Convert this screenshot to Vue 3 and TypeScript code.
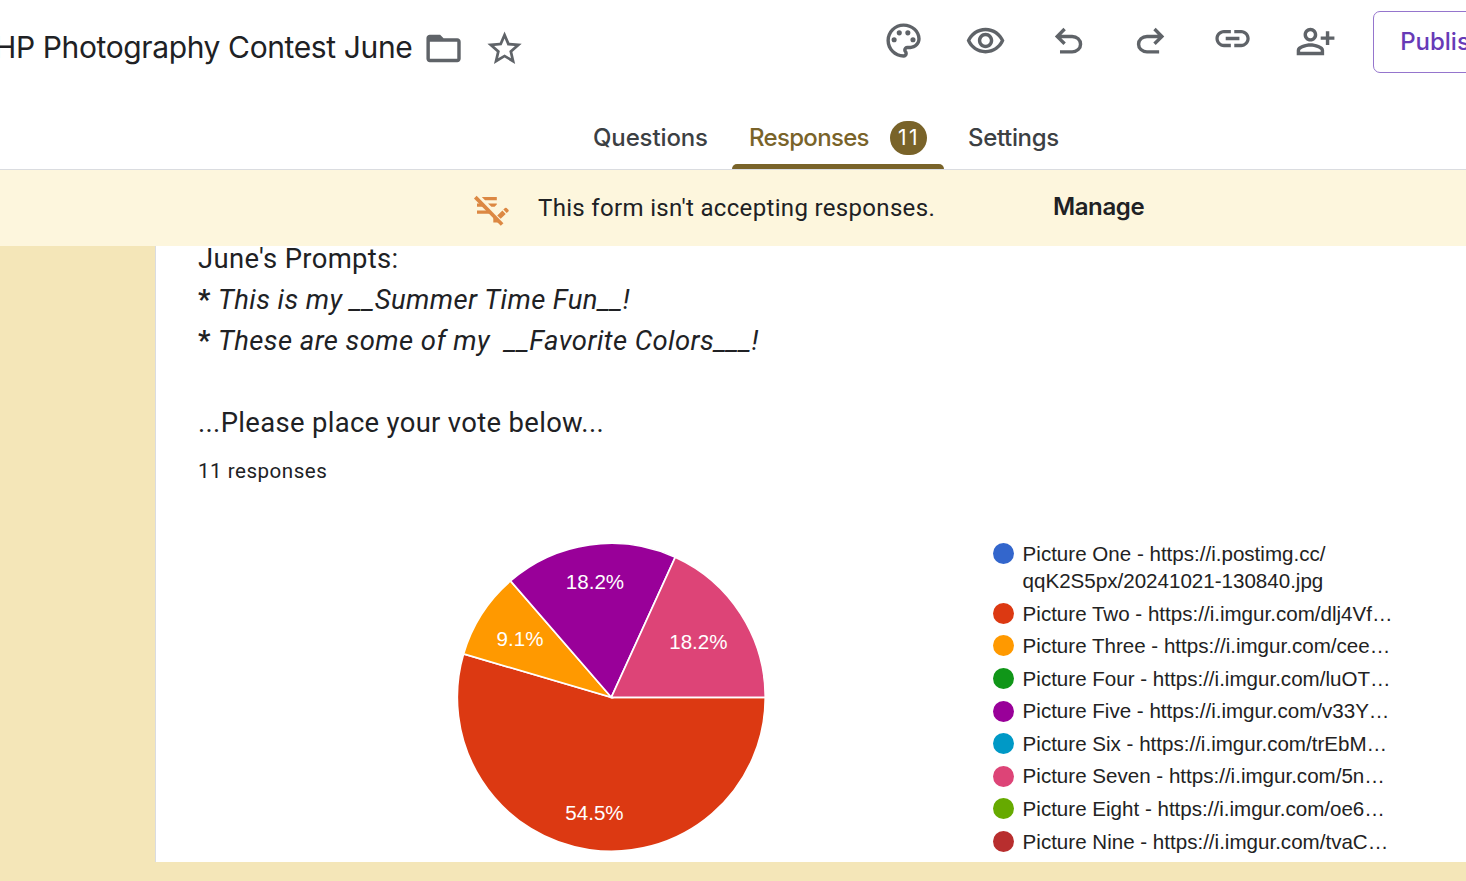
<script setup lang="ts">
interface Slice {
    count: number;
    color: string;
    label: string;
    labelX: number;
    labelY: number;
}

interface LegendItem {
    color: string;
    lines: string[];
}

const CENTER = 154.3;
const RADIUS = 154;

const tools = [
    { name: 'palette', path: 'M12 22C6.49 22 2 17.51 2 12S6.49 2 12 2s10 4.04 10 9c0 3.31-2.69 6-6 6h-1.77c-.28 0-.5.22-.5.5 0 .12.05.23.13.33.41.47.64 1.06.64 1.67A2.5 2.5 0 0 1 12 22zm0-18c-4.41 0-8 3.59-8 8s3.59 8 8 8c.28 0 .5-.22.5-.5a.54.54 0 0 0-.14-.35c-.41-.46-.63-1.05-.63-1.65a2.5 2.5 0 0 1 2.5-2.5H16c2.21 0 4-1.79 4-4 0-3.86-3.59-7-8-7zM5 11.5a1.5 1.5 0 1 0 3 0a1.5 1.5 0 1 0-3 0zM8 7.5a1.5 1.5 0 1 0 3 0a1.5 1.5 0 1 0-3 0zM13 7.5a1.5 1.5 0 1 0 3 0a1.5 1.5 0 1 0-3 0zM16 11.5a1.5 1.5 0 1 0 3 0a1.5 1.5 0 1 0-3 0z' },
    { name: 'preview', path: 'M12 6.5c3.79 0 7.17 2.13 8.82 5.5-1.65 3.37-5.02 5.5-8.82 5.5S4.83 15.37 3.18 12C4.83 8.63 8.21 6.5 12 6.5m0-2C7 4.5 2.73 7.61 1 12c1.73 4.39 6 7.5 11 7.5s9.27-3.11 11-7.5c-1.73-4.39-6-7.5-11-7.5zm0 5a2.5 2.5 0 0 1 0 5 2.5 2.5 0 0 1 0-5m0-2c-2.48 0-4.5 2.02-4.5 4.5s2.02 4.5 4.5 4.5 4.5-2.02 4.5-4.5-2.02-4.5-4.5-4.5z' },
    { name: 'undo', path: 'M7 19v-2h7.1q1.575 0 2.738-1T18 13.5T16.838 11T14.1 10H7.8l2.6 2.6L9 14L4 9l5-5l1.4 1.4L7.8 8h6.3q2.425 0 4.163 1.575T20 13.5t-1.737 3.925T14.1 19z' },
    { name: 'redo', path: 'M9.9 19q-2.425 0-4.163-1.575T4 13.5t1.737-3.925T9.9 8h6.3l-2.6-2.6L15 4l5 5l-5 5l-1.4-1.4l2.6-2.6H9.9q-1.575 0-2.738 1T6 13.5T7.162 16T9.9 17H17v2z' },
    { name: 'link', path: 'M3.9 12c0-1.71 1.39-3.1 3.1-3.1h4V7H7c-2.76 0-5 2.24-5 5s2.24 5 5 5h4v-1.9H7c-1.71 0-3.1-1.39-3.1-3.1zM8 13h8v-2H8v2zm9-6h-4v1.9h4c1.71 0 3.1 1.39 3.1 3.1s-1.39 3.1-3.1 3.1h-4V17h4c2.76 0 5-2.24 5-5s-2.24-5-5-5z' },
    { name: 'share', path: 'M9 12c2.21 0 4-1.79 4-4s-1.79-4-4-4-4 1.79-4 4 1.79 4 4 4zm0-6c1.1 0 2 .9 2 2s-.9 2-2 2-2-.9-2-2 .9-2 2-2zm0 7c-2.67 0-8 1.34-8 4v3h16v-3c0-2.66-5.33-4-8-4zm6 5H3v-.99C3.2 16.29 6.3 15 9 15s5.8 1.29 6 2v1zM18 6h2v3h3v2h-3v3h-2v-3h-3V9h3z' },
];

const slices: Slice[] = [
    { count: 6, color: '#dc3912', label: '54.5%', labelX: 137.5, labelY: 277 },
    { count: 1, color: '#ff9900', label: '9.1%', labelX: 63, labelY: 103 },
    { count: 2, color: '#990099', label: '18.2%', labelX: 138, labelY: 46 },
    { count: 2, color: '#dd4477', label: '18.2%', labelX: 241.4, labelY: 106 },
];

const legend: LegendItem[] = [
    { color: '#3366cc', lines: ['Picture One - https://i.postimg.cc/', 'qqK2S5px/20241021-130840.jpg'] },
    { color: '#dc3912', lines: ['Picture Two - https://i.imgur.com/dlj4Vf…'] },
    { color: '#ff9900', lines: ['Picture Three - https://i.imgur.com/cee…'] },
    { color: '#109618', lines: ['Picture Four - https://i.imgur.com/luOT…'] },
    { color: '#990099', lines: ['Picture Five - https://i.imgur.com/v33Y…'] },
    { color: '#0099c6', lines: ['Picture Six - https://i.imgur.com/trEbM…'] },
    { color: '#dd4477', lines: ['Picture Seven - https://i.imgur.com/5n…'] },
    { color: '#66aa00', lines: ['Picture Eight - https://i.imgur.com/oe6…'] },
    { color: '#b82e2e', lines: ['Picture Nine - https://i.imgur.com/tvaC…'] },
];

const total = slices.reduce((sum, slice) => sum + slice.count, 0);

function pointAt(count: number) {
    const angle = (count / total) * Math.PI * 2;
    return `${CENTER + RADIUS * Math.cos(angle)} ${CENTER + RADIUS * Math.sin(angle)}`;
}

// slices run clockwise from three o'clock
function slicePath(index: number) {
    const start = slices.slice(0, index).reduce((sum, slice) => sum + slice.count, 0);
    const end = start + slices[index].count;
    const large = slices[index].count / total > 0.5 ? 1 : 0;
    return `M${CENTER} ${CENTER}L${pointAt(start)}A${RADIUS} ${RADIUS} 0 ${large} 1 ${pointAt(end)}Z`;
}
</script>

<template>
    <div class="page">
        <header class="header">
            <div class="toolbar">
                <h1 class="title">HP Photography Contest June</h1>
                <svg class="icon folder" viewBox="0 0 24 24">
                    <path d="M20 6h-8l-2-2H4c-1.1 0-2 .9-2 2v12c0 1.1.9 2 2 2h16c1.1 0 2-.9 2-2V8c0-1.1-.9-2-2-2zm0 12H4V8h16v10z" />
                </svg>
                <svg class="icon star" viewBox="0 0 24 24">
                    <path d="M22 9.24l-7.19-.62L12 2 9.19 8.63 2 9.24l5.46 4.73L5.82 21 12 17.27 18.18 21l-1.63-7.03L22 9.24zM12 15.4l-3.76 2.27 1-4.28-3.32-2.88 4.38-.38L12 6.1l1.71 4.04 4.38.38-3.32 2.88 1 4.28L12 15.4z" />
                </svg>
                <div class="tools">
                    <svg v-for="tool in tools" :key="tool.name" class="icon" :class="tool.name" viewBox="0 0 24 24">
                        <path :d="tool.path" />
                    </svg>
                </div>
                <button class="publish">Published</button>
            </div>
            <nav class="tabs">
                <a class="tab questions">Questions</a>
                <a class="tab active"><span class="tab-label">Responses</span><span class="count">11</span></a>
                <a class="tab settings">Settings</a>
            </nav>
        </header>

        <div class="banner">
            <svg class="banner-icon" viewBox="0 0 36 32">
                <path d="M8.8 2h15v3.2H12zM4 8.4h4.8l3.4 3.4H4zM15 8.4h8.8v1.2l-2.2 2.2h-3.2zM4 15.4h11.6l3.2 3.4H4zM20.3 22l5 5.4h-5zM24.2 20.5l5.2-5 3.3 3.4-5 4.9zM30.3 14.6l1.7-1.6q.8-.7 1.6 0l1.8 1.8q.7.8 0 1.6l-1.7 1.6z" />
                <path class="slash" d="M2.3 2.1l26.8 27.4" />
            </svg>
            <span class="banner-text">This form isn't accepting responses.</span>
            <button class="manage">Manage</button>
        </div>

        <main class="card">
            <div class="question">
                <div class="june">June's Prompts:</div>
                <div class="summer"><b>*</b> <i>This is my __Summer Time Fun__!</i></div>
                <div class="colors"><b>*</b> <i>These are some of my &nbsp;__Favorite Colors___!</i></div>
                <br>
                <div class="vote">...Please place your vote below...</div>
            </div>
            <div class="responses">11 responses</div>
            <div class="chart">
                <svg class="pie" viewBox="0 0 308 308">
                    <path v-for="(slice, index) in slices" :key="index" :d="slicePath(index)" :fill="slice.color" />
                    <text v-for="(slice, index) in slices" :key="'label' + index" :x="slice.labelX" :y="slice.labelY">{{ slice.label }}</text>
                </svg>
                <ul class="legend">
                    <li v-for="item in legend" :key="item.lines[0]">
                        <span class="dot" :style="{ background: item.color }"></span>
                        <div>
                            <div v-for="line in item.lines" :key="line" class="line">{{ line }}</div>
                        </div>
                    </li>
                </ul>
            </div>
        </main>
    </div>
</template>

<style>
body {
    margin: 0;
    overflow: hidden;
}
</style>

<style scoped>
.page {
    width: 100vw;
    height: 881px;
    overflow: hidden;
    background: #f4e6b8;
    color: #202124;
    font-family: Roboto, sans-serif;
}

.header {
    box-sizing: border-box;
    height: 170px;
    overflow: hidden;
    background: #fff;
    border-bottom: 1px solid #dadce0;
}

.toolbar {
    display: flex;
    align-items: flex-start;
    height: 106px;
}

.title {
    flex: none;
    width: 426px;
    margin: 27px 0 0 -6px;
    font: 400 30px/41px Inter, sans-serif;
    letter-spacing: -0.38px;
    white-space: nowrap;
}

.icon {
    flex: none;
    width: 41.14px;
    height: 41.14px;
    fill: #5f6368;
}

.folder {
    margin: 28px 0 0 3px;
}

.star {
    margin: 28px 0 0 20.3px;
}

.tools {
    display: flex;
    gap: 41.2px;
    margin: 21px 0 0 357.4px;
}

.palette,
.preview {
    margin-top: -0.7px;
}

.undo,
.redo {
    margin-top: 0.4px;
}

.link {
    margin-top: -3px;
}

.publish {
    flex: none;
    box-sizing: border-box;
    width: 170px;
    height: 62px;
    margin: 11px 0 0 37.5px;
    padding: 0 0 2px 26px;
    background: #fff;
    border: 1px solid #9575cd;
    border-radius: 7px;
    color: #673ab7;
    font: 500 24px Inter, sans-serif;
    text-align: left;
}

.tabs {
    display: flex;
    height: 63px;
    padding-left: 593px;
    color: #3c4043;
    font: 500 24px/64px Inter, sans-serif;
}

.questions {
    width: 139px;
    letter-spacing: -0.12px;
}

.active {
    display: flex;
    align-items: center;
    position: relative;
    box-sizing: border-box;
    width: 212px;
    padding-left: 17px;
    color: #796329;
}

.active::after {
    content: "";
    position: absolute;
    right: 0;
    bottom: 0;
    left: 0;
    height: 5px;
    border-radius: 5px 5px 0 0;
    background: #796329;
}

.tab-label {
    width: 141px;
    letter-spacing: -0.68px;
}

.count {
    box-sizing: border-box;
    width: 37px;
    height: 34px;
    padding-left: 1px;
    border-radius: 17px;
    background: #796329;
    color: #fff;
    font-size: 21px;
    font-weight: 400;
    line-height: 34px;
    letter-spacing: 2.4px;
    text-align: center;
}

.settings {
    padding-left: 24px;
    letter-spacing: -0.34px;
}

.banner {
    display: flex;
    height: 76px;
    padding-left: 473px;
    background: #fdf6dd;
    line-height: 76px;
}

.banner-icon {
    width: 36px;
    height: 32px;
    margin: 25px 29px 0 0;
    fill: #dc8843;
}

.slash {
    fill: none;
    stroke: #dc8843;
    stroke-width: 3.7;
}

.banner-text {
    width: 515px;
    font-size: 24px;
    letter-spacing: 0.33px;
}

.manage {
    padding: 0 0 3px;
    background: none;
    border: 0;
    color: #202124;
    font: 600 24px Inter, sans-serif;
    letter-spacing: -0.4px;
}

.card {
    box-sizing: border-box;
    height: 616px;
    margin-left: 155px;
    padding-left: 42px;
    overflow: hidden;
    background: #fff;
    border-left: 1px solid #dadce0;
}

.question {
    margin-top: -7.4px;
    font-size: 27.43px;
    line-height: 41.14px;
    letter-spacing: 0.33px;
}

.question i {
    letter-spacing: 0.44px;
}

.responses {
    margin-top: 9.3px;
    font-size: 20.57px;
    line-height: 34px;
    letter-spacing: 0.5px;
}

.chart {
    display: flex;
    padding: 55.6px 0 0 259.3px;
}

.pie {
    flex: none;
    width: 308px;
    height: 308px;
    overflow: visible;
}

.pie path {
    stroke: #fff;
    stroke-width: 1.7;
}

.pie text {
    fill: #fff;
    font: 20.57px "Liberation Sans", Arial, sans-serif;
    text-anchor: middle;
}

.legend {
    margin: -3.1px 0 0 227.8px;
    padding: 0;
    list-style: none;
    color: #222;
    font: 20.57px/27px "Liberation Sans", Arial, sans-serif;
}

.legend li {
    display: flex;
    gap: 8.5px;
    margin-bottom: 5.57px;
    white-space: nowrap;
}

.dot {
    width: 21px;
    height: 21px;
    margin-top: 3.2px;
    border-radius: 50%;
}
</style>
